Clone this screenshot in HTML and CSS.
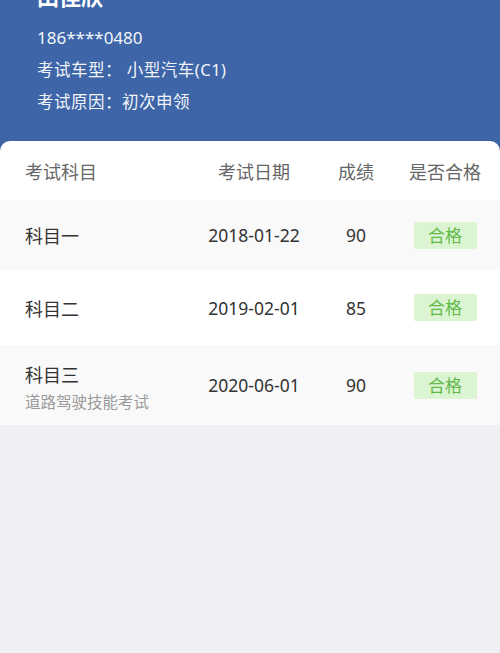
FILE: index.html
```html
<!DOCTYPE html>
<html lang="zh-CN">
<head>
	<meta charset="UTF-8">
	<title>考试成绩</title>
	<link rel="stylesheet" href="styles.css">
</head>
<body>
	<div class="user-head">
		<div class="user-name">田佳欣</div>
		<div class="user-line user-phone">186****0480</div>
		<div class="user-line">考试车型： 小型汽车(C1)</div>
		<div class="user-line">考试原因：初次申领</div>
	</div>
	<div class="score-card">
		<div class="score-row score-title">
			<div class="col-subject">考试科目</div>
			<div class="col-center">考试日期</div>
			<div class="col-center">成绩</div>
			<div class="col-center">是否合格</div>
		</div>
		<div class="score-row row-one gray">
			<div class="col-subject">科目一</div>
			<div class="col-center num">2018-01-22</div>
			<div class="col-center num">90</div>
			<div class="col-center"><span class="pass">合格</span></div>
		</div>
		<div class="score-row row-two">
			<div class="col-subject">科目二</div>
			<div class="col-center num">2019-02-01</div>
			<div class="col-center num">85</div>
			<div class="col-center"><span class="pass">合格</span></div>
		</div>
		<div class="score-row row-three gray">
			<div class="col-subject">
				<div class="subject-name">科目三</div>
				<div class="subject-desc">道路驾驶技能考试</div>
			</div>
			<div class="col-center num">2020-06-01</div>
			<div class="col-center num">90</div>
			<div class="col-center"><span class="pass">合格</span></div>
		</div>
	</div>
</body>
</html>
```

FILE: styles.css
```css
/* reset */
* {
	margin: 0;
	padding: 0;
	box-sizing: border-box;
}
body {
	font-family: "Noto Sans", "Noto Sans CJK SC", sans-serif;
	background: #efeff4;
	color: #333;
}
.user-head {
	background: #3d65a7;
	color: #f2f5fa;
	padding: 0 20px 33px 37px;
}
.user-name {
	margin-top: -18px;
	line-height: 28px;
	font-size: 22px;
	font-weight: bold;
	color: #fff;
}
.user-line {
	line-height: 32px;
	font-size: 16.5px;
	letter-spacing: 0.5px;
}
.user-phone {
	margin-top: 12px;
	font-size: 17px;
	letter-spacing: 0;
}
.score-card {
	margin-top: -10px;
	background: #fff;
	border-radius: 10px 10px 0 0;
	overflow: hidden;
}
.score-row {
	display: grid;
	grid-template-columns: 169px 120px 84px 94px;
	align-items: center;
	padding: 0 8px 0 25px;
	font-size: 18px;
}
.score-row.gray {
	background: #f9f9f9;
}
.score-title {
	height: 59px;
	color: #666;
}
.row-one {
	height: 70px;
}
.row-two {
	height: 75px;
}
.row-three {
	height: 80px;
}
.col-center {
	text-align: center;
}
.num {
	font-size: 17.5px;
}
.pass {
	display: inline-block;
	width: 63px;
	height: 27px;
	line-height: 27px;
	font-size: 17px;
	color: #62b94a;
	background: #dbf4d1;
	border-radius: 2px;
}
.row-three .col-subject {
	align-self: start;
	padding-top: 18px;
}
.subject-name {
	line-height: 24px;
}
.subject-desc {
	margin-top: 5px;
	line-height: 20px;
	font-size: 15.5px;
	color: #999;
}
```
